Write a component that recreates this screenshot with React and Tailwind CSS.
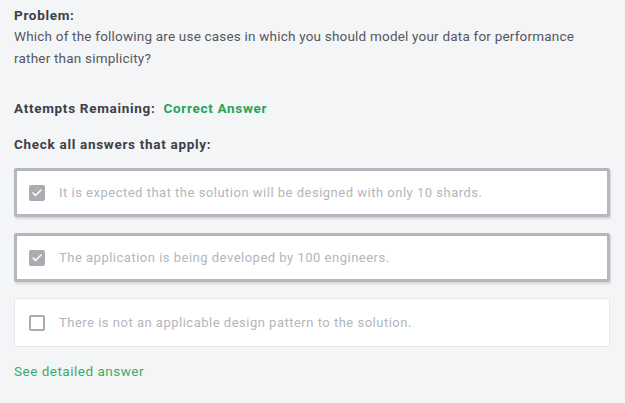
import { Check } from "lucide-react";

const answers = [
  { text: "It is expected that the solution will be designed with only 10 shards.", checked: true },
  { text: "The application is being developed by 100 engineers.", checked: true },
  { text: "There is not an applicable design pattern to the solution.", checked: false },
];

function Answer({ text, checked }) {
  return (
    <div
      className={`flex items-center h-[49px] bg-white rounded-[2px] ${
        checked
          ? "border-[3px] border-[#b4b7bb] shadow-[1px_2px_2px_rgba(0,0,0,0.12)] pl-[12px]"
          : "border border-[#e5e7ea] pl-[14px]"
      }`}
    >
      {checked ? (
        <span className="flex items-center justify-center w-[16px] h-[16px] rounded-[2px] bg-[#a9adb2]">
          <Check className="w-[12px] h-[12px] text-white" strokeWidth={3} />
        </span>
      ) : (
        <span className="w-[16px] h-[16px] rounded-[2px] border-2 border-[#a9adb2]" />
      )}
      <span className="ml-[14px] text-[13px] tracking-[0.5px] text-[#b3b6ba]">{text}</span>
    </div>
  );
}

export default function App() {
  return (
    <div className="w-[625px] h-[403px] bg-[#f4f5f7] px-[14px] pt-[5px] font-['Roboto',sans-serif] text-[#54585e]">
      <div className="text-[13.5px] font-bold tracking-[0.7px] leading-[20px] text-[#3d4046]">Problem:</div>
      <p className="text-[13.5px] tracking-[0.2px] leading-[22px] pr-[20px]">
        Which of the following are use cases in which you should model your data for performance rather than simplicity?
      </p>

      <div className="mt-[29px] flex items-center gap-[8px] text-[13.5px] font-bold tracking-[0.7px] leading-[20px]">
        <span className="text-[#3d4046]">Attempts Remaining:</span>
        <span className="text-[#27a35a]">Correct Answer</span>
      </div>

      <div className="mt-[16px] text-[13.5px] font-bold tracking-[0.7px] leading-[20px] text-[#3d4046]">
        Check all answers that apply:
      </div>

      <div className="mt-[14px] flex flex-col gap-[16px] pr-[1px]">
        {answers.map((a) => (
          <Answer key={a.text} {...a} />
        ))}
      </div>

      <div className="mt-[14px] text-[13.5px] tracking-[0.5px] leading-[20px] text-[#3daa6a]">See detailed answer</div>
    </div>
  );
}
